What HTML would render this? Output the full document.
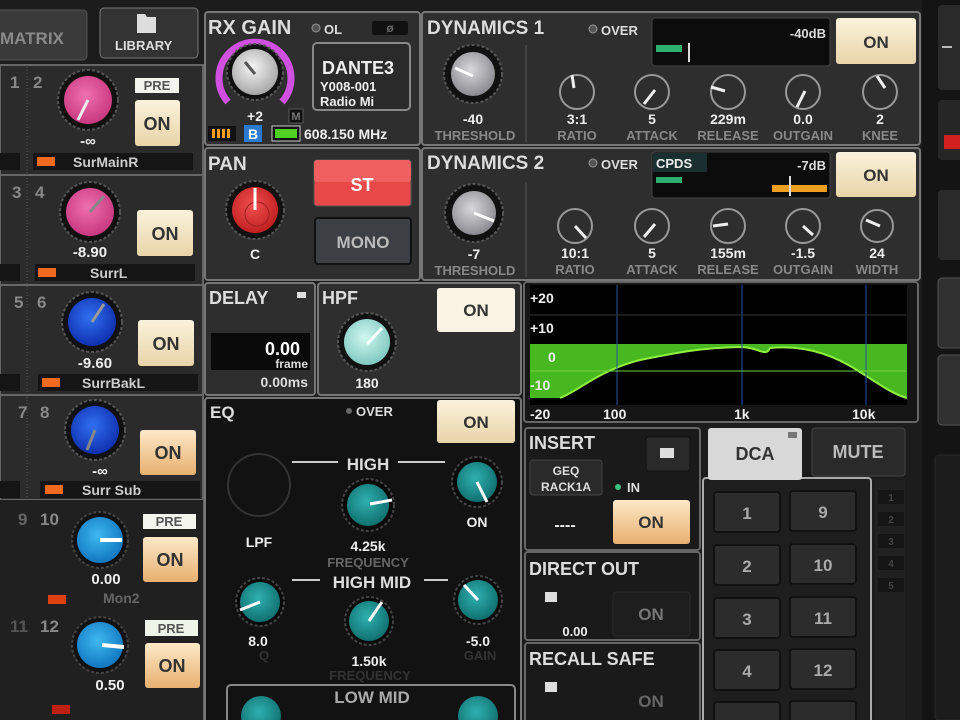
<!DOCTYPE html>
<html><head><meta charset="utf-8"><style>
html,body{margin:0;padding:0;background:#1a1a1a;}
svg{display:block;}
text{font-family:"Liberation Sans",sans-serif;font-weight:bold;}
</style></head><body>
<svg width="960" height="720" viewBox="0 0 960 720" xmlns="http://www.w3.org/2000/svg">
<defs>
<radialGradient id="gw" cx="45%" cy="40%" r="60%"><stop offset="0" stop-color="#f4f4f4"/><stop offset="1" stop-color="#a8a8a8"/></radialGradient>
<radialGradient id="gg" cx="45%" cy="40%" r="60%"><stop offset="0" stop-color="#d8d8dc"/><stop offset="1" stop-color="#8a8a90"/></radialGradient>
<radialGradient id="gp" cx="45%" cy="40%" r="60%"><stop offset="0" stop-color="#f070b0"/><stop offset="1" stop-color="#c83880"/></radialGradient>
<radialGradient id="gr" cx="45%" cy="40%" r="60%"><stop offset="0" stop-color="#f05050"/><stop offset="1" stop-color="#c02020"/></radialGradient>
<radialGradient id="gb" cx="45%" cy="40%" r="60%"><stop offset="0" stop-color="#3070f0"/><stop offset="1" stop-color="#1030b0"/></radialGradient>
<radialGradient id="gc" cx="45%" cy="40%" r="60%"><stop offset="0" stop-color="#40b8f0"/><stop offset="1" stop-color="#1078c0"/></radialGradient>
<radialGradient id="gt" cx="45%" cy="40%" r="60%"><stop offset="0" stop-color="#30b0b0"/><stop offset="1" stop-color="#107070"/></radialGradient>
<radialGradient id="gm" cx="45%" cy="40%" r="60%"><stop offset="0" stop-color="#d0f8f0"/><stop offset="1" stop-color="#80c8c0"/></radialGradient>
<linearGradient id="on" x1="0" y1="0" x2="0" y2="1"><stop offset="0" stop-color="#fbf2dc"/><stop offset="1" stop-color="#e8d4a8"/></linearGradient>
<linearGradient id="ono" x1="0" y1="0" x2="0" y2="1"><stop offset="0" stop-color="#fde8c8"/><stop offset="1" stop-color="#e8b070"/></linearGradient>
</defs>
<rect width="960" height="720" fill="#1c1c1c"/>

<!-- top tabs -->
<rect x="-5" y="10" width="92" height="50" rx="4" fill="#3a3a3a" stroke="#555"/>
<text x="0" y="44" fill="#8a8a8a" font-size="17">MATRIX</text>
<rect x="100" y="8" width="98" height="50" rx="4" fill="#333" stroke="#777"/>
<path d="M137 14h8l2 3h9v16h-19z" fill="#ddd"/>
<text x="115" y="50" fill="#ddd" font-size="13">LIBRARY</text>

<!-- left channel strip -->
<rect x="0" y="65" width="203" height="655" fill="#2b2b2b" stroke="#666" stroke-width="2"/>
<line x1="27" y1="67" x2="27" y2="720" stroke="#555" stroke-dasharray="1 2"/>
<g stroke="#666" stroke-width="2"><line x1="0" y1="175" x2="203" y2="175"/><line x1="0" y1="285" x2="203" y2="285"/><line x1="0" y1="395" x2="203" y2="395"/><line x1="0" y1="500" x2="203" y2="500"/><line x1="0" y1="610" x2="203" y2="610"/></g>
<rect x="0" y="500" width="203" height="220" fill="#202020"/>
<g fill="#888" font-size="17">
<text x="10" y="88">1</text><text x="33" y="88">2</text>
<text x="12" y="198">3</text><text x="35" y="198">4</text>
<text x="14" y="308">5</text><text x="37" y="308">6</text>
<text x="18" y="418">7</text><text x="40" y="418">8</text>
<text x="18" y="525" fill="#666">9</text><text x="40" y="525">10</text>
<text x="10" y="632" fill="#555">11</text><text x="40" y="632">12</text>
</g>
<!-- name bars -->
<g fill="#151515">
<rect x="0" y="153" width="20" height="17"/><rect x="33" y="153" width="160" height="17"/>
<rect x="0" y="264" width="20" height="17"/><rect x="35" y="264" width="160" height="17"/>
<rect x="0" y="374" width="20" height="17"/><rect x="38" y="374" width="160" height="17"/>
<rect x="0" y="481" width="20" height="17"/><rect x="40" y="481" width="160" height="17"/>
</g>
<g fill="#f06a20"><rect x="37" y="157" width="18" height="9"/><rect x="38" y="268" width="18" height="9"/><rect x="42" y="378" width="18" height="9"/><rect x="45" y="485" width="18" height="9"/><rect x="48" y="595" width="18" height="9" fill="#e04010"/><rect x="52" y="705" width="18" height="9" fill="#c02010"/></g>
<g fill="#ccc" font-size="14" font-weight="normal">
<text x="73" y="167">SurMainR</text><text x="90" y="278">SurrL</text><text x="82" y="388">SurrBakL</text><text x="82" y="495">Surr Sub</text><text x="103" y="603" fill="#666">Mon2</text>
</g>
<!-- left knobs -->
<g>
<circle cx="88" cy="100" r="30" fill="#111" stroke="#555" stroke-dasharray="3 2" stroke-width="2"/><circle cx="88" cy="100" r="24" fill="url(#gp)"/><line x1="88" y1="100" x2="78" y2="120" stroke="#eee" stroke-width="3"/>
<circle cx="90" cy="212" r="30" fill="#111" stroke="#555" stroke-dasharray="3 2" stroke-width="2"/><circle cx="90" cy="212" r="24" fill="url(#gp)"/><line x1="90" y1="212" x2="104" y2="196" stroke="#888" stroke-width="3"/>
<circle cx="92" cy="322" r="30" fill="#111" stroke="#555" stroke-dasharray="3 2" stroke-width="2"/><circle cx="92" cy="322" r="24" fill="url(#gb)"/><line x1="92" y1="322" x2="104" y2="304" stroke="#999" stroke-width="3"/>
<circle cx="95" cy="430" r="30" fill="#111" stroke="#555" stroke-dasharray="3 2" stroke-width="2"/><circle cx="95" cy="430" r="24" fill="url(#gb)"/><line x1="95" y1="430" x2="87" y2="450" stroke="#888" stroke-width="3"/>
<circle cx="100" cy="540" r="28" fill="#111" stroke="#444" stroke-dasharray="3 2" stroke-width="2"/><circle cx="100" cy="540" r="23" fill="url(#gc)"/><line x1="100" y1="540" x2="122" y2="540" stroke="#fff" stroke-width="4"/>
<circle cx="100" cy="645" r="28" fill="#111" stroke="#444" stroke-dasharray="3 2" stroke-width="2"/><circle cx="100" cy="645" r="23" fill="url(#gc)"/><line x1="102" y1="645" x2="124" y2="647" stroke="#fff" stroke-width="4"/>
</g>
<g fill="#eee" font-size="15" text-anchor="middle">
<text x="88" y="146">-∞</text><text x="90" y="257">-8.90</text><text x="95" y="368">-9.60</text><text x="100" y="476">-∞</text><text x="106" y="584">0.00</text><text x="110" y="690">0.50</text>
</g>
<g font-size="13" fill="#555" text-anchor="middle" font-weight="normal">
<rect x="135" y="78" width="44" height="15" fill="#f4f4ee"/><text x="157" y="90">PRE</text>
<rect x="143" y="514" width="53" height="15" fill="#f4f4ee"/><text x="169" y="526">PRE</text>
<rect x="145" y="620" width="53" height="16" fill="#eef4e8"/><text x="171" y="633">PRE</text>
</g>
<g font-size="18" fill="#333" text-anchor="middle" font-weight="normal">
<rect x="135" y="100" width="45" height="46" rx="3" fill="url(#on)"/><text x="157" y="130">ON</text>
<rect x="137" y="210" width="56" height="46" rx="3" fill="url(#on)"/><text x="165" y="240">ON</text>
<rect x="138" y="320" width="56" height="46" rx="3" fill="url(#on)"/><text x="166" y="350">ON</text>
<rect x="140" y="430" width="56" height="45" rx="3" fill="url(#ono)"/><text x="168" y="459">ON</text>
<rect x="143" y="537" width="55" height="45" rx="3" fill="url(#ono)"/><text x="170" y="566">ON</text>
<rect x="145" y="643" width="55" height="45" rx="3" fill="url(#ono)"/><text x="172" y="672">ON</text>
</g>

<!-- RX GAIN -->
<rect x="205" y="12" width="215" height="133" rx="3" fill="#2e2e2e" stroke="#777" stroke-width="2"/>
<text x="208" y="34" fill="#ddd" font-size="20" font-weight="normal">RX GAIN</text>
<circle cx="316" cy="28" r="4" fill="#555" stroke="#999"/><text x="324" y="34" fill="#ddd" font-size="13">OL</text>
<rect x="372" y="21" width="36" height="14" rx="2" fill="#111"/><text x="390" y="32" fill="#666" font-size="12" text-anchor="middle">ø</text>
<path d="M228 102 A36 36 0 1 1 282 102" fill="none" stroke="#d050e0" stroke-width="7"/>
<circle cx="255" cy="72" r="28" fill="#111" stroke="#555" stroke-dasharray="3 2" stroke-width="2"/><circle cx="255" cy="72" r="23" fill="url(#gw)"/><line x1="255" y1="74" x2="245" y2="62" stroke="#555" stroke-width="3"/>
<text x="255" y="121" fill="#eee" font-size="14" text-anchor="middle">+2</text>
<rect x="289" y="109" width="14" height="14" fill="#111" stroke="#555"/><text x="296" y="120" fill="#777" font-size="11" text-anchor="middle">M</text>
<rect x="313" y="43" width="97" height="67" rx="4" fill="#2a2a2a" stroke="#888" stroke-width="2"/>
<text x="322" y="74" fill="#eee" font-size="18">DANTE3</text>
<text x="320" y="91" fill="#eee" font-size="13" font-weight="normal">Y008-001</text>
<text x="320" y="106" fill="#eee" font-size="13" font-weight="normal">Radio Mi</text>
<rect x="208" y="126" width="28" height="15" fill="#111"/><g fill="#f0a020"><rect x="212" y="129" width="3" height="9"/><rect x="217" y="129" width="3" height="9"/><rect x="222" y="129" width="3" height="9"/><rect x="227" y="129" width="3" height="9"/></g>
<rect x="244" y="125" width="18" height="17" fill="#2b7ad0"/><text x="253" y="139" fill="#fff" font-size="14" text-anchor="middle">B</text>
<rect x="272" y="126" width="28" height="15" fill="#111" stroke="#ccc"/><rect x="275" y="129" width="22" height="9" fill="#50d020"/>
<text x="304" y="139" fill="#eee" font-size="14">608.150 MHz</text>

<!-- PAN -->
<rect x="205" y="148" width="215" height="132" rx="3" fill="#2e2e2e" stroke="#777" stroke-width="2"/>
<text x="208" y="170" fill="#ddd" font-size="19" font-weight="normal">PAN</text>
<circle cx="255" cy="210" r="29" fill="#111" stroke="#555" stroke-dasharray="3 2" stroke-width="2"/><circle cx="255" cy="210" r="23" fill="url(#gr)"/><circle cx="257" cy="214" r="12" fill="none" stroke="#a02020"/><line x1="255" y1="210" x2="255" y2="188" stroke="#fff" stroke-width="3"/>
<text x="255" y="259" fill="#eee" font-size="14" text-anchor="middle">C</text>
<rect x="314" y="160" width="97" height="46" rx="3" fill="#e84848" stroke="#555"/><rect x="314" y="160" width="97" height="22" rx="3" fill="#f06060"/>
<text x="362" y="191" fill="#fff" font-size="18" text-anchor="middle">ST</text>
<rect x="315" y="218" width="96" height="46" rx="3" fill="#3c4044" stroke="#111" stroke-width="2"/>
<text x="363" y="248" fill="#bbb" font-size="17" text-anchor="middle">MONO</text>

<!-- DELAY -->
<rect x="205" y="283" width="110" height="112" rx="3" fill="#2e2e2e" stroke="#777" stroke-width="2"/>
<text x="209" y="304" fill="#ddd" font-size="18" font-weight="normal">DELAY</text>
<rect x="297" y="292" width="9" height="6" fill="#ddd"/>
<rect x="211" y="333" width="99" height="37" fill="#0a0a0a"/>
<text x="300" y="355" fill="#fff" font-size="18" text-anchor="end">0.00</text>
<text x="308" y="368" fill="#ddd" font-size="12" text-anchor="end" font-weight="normal">frame</text>
<text x="308" y="387" fill="#ddd" font-size="14" text-anchor="end" font-weight="normal">0.00ms</text>

<!-- HPF -->
<rect x="318" y="283" width="203" height="112" rx="3" fill="#2e2e2e" stroke="#777" stroke-width="2"/>
<text x="322" y="304" fill="#ddd" font-size="18" font-weight="normal">HPF</text>
<rect x="437" y="288" width="78" height="44" rx="3" fill="#fbf4e4"/><text x="476" y="316" fill="#333" font-size="17" text-anchor="middle" font-weight="normal">ON</text>
<circle cx="367" cy="342" r="29" fill="#111" stroke="#555" stroke-dasharray="3 2" stroke-width="2"/><circle cx="367" cy="342" r="23" fill="url(#gm)"/><line x1="367" y1="344" x2="382" y2="328" stroke="#fff" stroke-width="3"/>
<text x="367" y="388" fill="#eee" font-size="14" text-anchor="middle">180</text>

<!-- EQ -->
<rect x="205" y="398" width="316" height="330" rx="3" fill="#121212" stroke="#777" stroke-width="2"/>
<text x="210" y="418" fill="#ddd" font-size="17">EQ</text>
<circle cx="349" cy="411" r="3" fill="#666"/><text x="356" y="416" fill="#ddd" font-size="13">OVER</text>
<rect x="437" y="400" width="78" height="43" rx="3" fill="url(#on)"/><text x="476" y="428" fill="#333" font-size="17" text-anchor="middle" font-weight="normal">ON</text>
<circle cx="259" cy="485" r="31" fill="none" stroke="#333" stroke-width="2"/>
<text x="259" y="547" fill="#eee" font-size="14" text-anchor="middle">LPF</text>
<g stroke="#ccc" stroke-width="2"><line x1="292" y1="462" x2="338" y2="462"/><line x1="398" y1="462" x2="445" y2="462"/><line x1="292" y1="580" x2="320" y2="580"/><line x1="424" y1="580" x2="448" y2="580"/><line x1="312" y1="696" x2="322" y2="696"/><line x1="422" y1="696" x2="446" y2="696"/></g>
<text x="368" y="470" fill="#ddd" font-size="17" text-anchor="middle" font-weight="normal">HIGH</text>
<text x="372" y="588" fill="#ddd" font-size="17" text-anchor="middle" font-weight="normal">HIGH MID</text>
<g>
<circle cx="368" cy="505" r="26" fill="#0a0a0a" stroke="#444" stroke-dasharray="3 2" stroke-width="2"/><circle cx="368" cy="505" r="21" fill="url(#gt)"/><line x1="370" y1="504" x2="392" y2="500" stroke="#fff" stroke-width="3"/>
<circle cx="477" cy="482" r="25" fill="#0a0a0a" stroke="#444" stroke-dasharray="3 2" stroke-width="2"/><circle cx="477" cy="482" r="20" fill="url(#gt)"/><line x1="477" y1="482" x2="487" y2="502" stroke="#fff" stroke-width="3"/>
<circle cx="260" cy="602" r="24" fill="#0a0a0a" stroke="#444" stroke-dasharray="3 2" stroke-width="2"/><circle cx="260" cy="602" r="20" fill="url(#gt)"/><line x1="260" y1="602" x2="240" y2="610" stroke="#fff" stroke-width="3"/>
<circle cx="369" cy="621" r="24" fill="#0a0a0a" stroke="#444" stroke-dasharray="3 2" stroke-width="2"/><circle cx="369" cy="621" r="20" fill="url(#gt)"/><line x1="369" y1="621" x2="382" y2="602" stroke="#fff" stroke-width="3"/>
<circle cx="478" cy="600" r="24" fill="#0a0a0a" stroke="#444" stroke-dasharray="3 2" stroke-width="2"/><circle cx="478" cy="600" r="20" fill="url(#gt)"/><line x1="478" y1="600" x2="464" y2="585" stroke="#fff" stroke-width="3"/>
</g>
<g fill="#eee" font-size="14" text-anchor="middle">
<text x="368" y="551">4.25k</text><text x="477" y="527">ON</text><text x="258" y="646">8.0</text><text x="369" y="666">1.50k</text><text x="478" y="646">-5.0</text>
</g>
<g fill="#666" font-size="13" text-anchor="middle" font-weight="normal"><text x="368" y="567">FREQUENCY</text><text x="264" y="660" fill="#333">Q</text><text x="480" y="660" fill="#333">GAIN</text><text x="370" y="680" fill="#333">FREQUENCY</text></g>
<rect x="227" y="685" width="288" height="45" rx="4" fill="#121212" stroke="#888" stroke-width="2"/>
<text x="372" y="703" fill="#aaa" font-size="17" text-anchor="middle" font-weight="normal">LOW MID</text>
<circle cx="261" cy="716" r="20" fill="url(#gt)"/><circle cx="478" cy="716" r="20" fill="url(#gt)"/>

<!-- DYNAMICS 1 -->
<rect x="422" y="12" width="498" height="133" rx="3" fill="#2e2e2e" stroke="#777" stroke-width="2"/>
<text x="427" y="34" fill="#ddd" font-size="19" font-weight="normal">DYNAMICS 1</text>
<circle cx="593" cy="29" r="4" fill="#555" stroke="#999"/><text x="601" y="35" fill="#ddd" font-size="13">OVER</text>
<rect x="652" y="18" width="178" height="48" rx="3" fill="#0c0c0c" stroke="#444"/>
<text x="826" y="38" fill="#ddd" font-size="13" text-anchor="end" font-weight="normal">-40dB</text>
<rect x="656" y="45" width="26" height="7" fill="#30b070"/><line x1="689" y1="43" x2="689" y2="62" stroke="#ddd" stroke-width="2"/>
<rect x="836" y="18" width="80" height="46" rx="3" fill="url(#on)"/><text x="876" y="48" fill="#333" font-size="17" text-anchor="middle" font-weight="normal">ON</text>
<line x1="526" y1="45" x2="526" y2="142" stroke="#555"/>
<circle cx="473" cy="74" r="29" fill="#111" stroke="#555" stroke-dasharray="3 2" stroke-width="2"/><circle cx="473" cy="74" r="22" fill="url(#gg)"/><line x1="473" y1="76" x2="455" y2="68" stroke="#fff" stroke-width="3"/>
<text x="473" y="124" fill="#eee" font-size="14" text-anchor="middle">-40</text>
<g fill="#888" font-size="13" text-anchor="middle"><text x="475" y="140">THRESHOLD</text><text x="577" y="140">RATIO</text><text x="652" y="140">ATTACK</text><text x="728" y="140">RELEASE</text><text x="803" y="140">OUTGAIN</text><text x="880" y="140">KNEE</text></g>
<g fill="none" stroke="#999" stroke-width="2"><circle cx="577" cy="92" r="17"/><circle cx="652" cy="92" r="17"/><circle cx="728" cy="92" r="17"/><circle cx="803" cy="92" r="17"/><circle cx="880" cy="92" r="17"/></g>
<g stroke="#eee" stroke-width="3"><line x1="572" y1="75" x2="574" y2="88"/><line x1="655" y1="90" x2="644" y2="104"/><line x1="725" y1="91" x2="711" y2="87"/><line x1="805" y1="91" x2="797" y2="107"/><line x1="885" y1="88" x2="877" y2="76"/></g>
<g fill="#eee" font-size="14" text-anchor="middle"><text x="577" y="124">3:1</text><text x="652" y="124">5</text><text x="728" y="124">229m</text><text x="803" y="124">0.0</text><text x="880" y="124">2</text></g>

<!-- DYNAMICS 2 -->
<rect x="422" y="148" width="498" height="132" rx="3" fill="#2e2e2e" stroke="#777" stroke-width="2"/>
<text x="427" y="169" fill="#ddd" font-size="19" font-weight="normal">DYNAMICS 2</text>
<circle cx="593" cy="163" r="4" fill="#555" stroke="#999"/><text x="601" y="169" fill="#ddd" font-size="13">OVER</text>
<rect x="652" y="152" width="178" height="46" rx="3" fill="#0c0c0c" stroke="#444"/>
<rect x="653" y="153" width="54" height="19" fill="#1a3030"/><text x="656" y="168" fill="#eee" font-size="13">CPDS</text>
<text x="826" y="170" fill="#ddd" font-size="13" text-anchor="end" font-weight="normal">-7dB</text>
<rect x="656" y="177" width="26" height="6" fill="#30b070"/><rect x="772" y="185" width="55" height="7" fill="#f0a020"/><line x1="790" y1="176" x2="790" y2="196" stroke="#ddd" stroke-width="2"/>
<rect x="836" y="152" width="80" height="45" rx="3" fill="url(#on)"/><text x="876" y="181" fill="#333" font-size="17" text-anchor="middle" font-weight="normal">ON</text>
<line x1="526" y1="182" x2="526" y2="277" stroke="#555"/>
<circle cx="474" cy="213" r="29" fill="#111" stroke="#555" stroke-dasharray="3 2" stroke-width="2"/><circle cx="474" cy="213" r="22" fill="url(#gg)"/><line x1="474" y1="213" x2="494" y2="221" stroke="#fff" stroke-width="3"/>
<text x="474" y="259" fill="#eee" font-size="14" text-anchor="middle">-7</text>
<g fill="#888" font-size="13" text-anchor="middle"><text x="475" y="275">THRESHOLD</text><text x="575" y="274">RATIO</text><text x="652" y="274">ATTACK</text><text x="728" y="274">RELEASE</text><text x="803" y="274">OUTGAIN</text><text x="877" y="274">WIDTH</text></g>
<g fill="none" stroke="#999" stroke-width="2"><circle cx="575" cy="226" r="17"/><circle cx="652" cy="226" r="17"/><circle cx="728" cy="226" r="17"/><circle cx="803" cy="226" r="17"/><circle cx="877" cy="226" r="16"/></g>
<g stroke="#eee" stroke-width="3"><line x1="575" y1="226" x2="586" y2="238"/><line x1="655" y1="224" x2="644" y2="237"/><line x1="728" y1="224" x2="713" y2="226"/><line x1="803" y1="226" x2="813" y2="235"/><line x1="880" y1="226" x2="866" y2="220"/></g>
<g fill="#eee" font-size="14" text-anchor="middle"><text x="575" y="258">10:1</text><text x="652" y="258">5</text><text x="728" y="258">155m</text><text x="803" y="258">-1.5</text><text x="877" y="258">24</text></g>

<!-- EQ graph -->
<rect x="524" y="282" width="394" height="140" rx="3" fill="#161616" stroke="#666" stroke-width="2"/>
<rect x="530" y="285" width="377" height="120" fill="#000"/>
<rect x="530" y="344" width="377" height="54" fill="#48b820"/>
<path d="M560 398 C580 390 600 370 640 360 C680 352 700 348 740 347 C760 347 765 358 770 348 C800 345 830 352 860 372 C880 385 895 395 907 398 Z" fill="#000"/>
<path d="M560 398 C580 390 600 370 640 360 C680 352 700 348 740 347 C760 347 765 358 770 348 C800 345 830 352 860 372 C880 385 895 395 907 398" fill="none" stroke="#90f040" stroke-width="2"/>
<g stroke="#2850a0" stroke-width="1"><line x1="617" y1="285" x2="617" y2="405"/><line x1="742" y1="285" x2="742" y2="405"/><line x1="866" y1="285" x2="866" y2="405"/></g>
<g stroke="#333" stroke-width="1"><line x1="530" y1="315" x2="907" y2="315"/><line x1="530" y1="371" x2="907" y2="371" stroke="#70d040"/></g>
<g fill="#eee" font-size="14"><text x="530" y="303">+20</text><text x="530" y="333">+10</text><text x="548" y="362">0</text><text x="530" y="390">-10</text><text x="530" y="419">-20</text><text x="603" y="419">100</text><text x="734" y="419">1k</text><text x="852" y="419">10k</text></g>

<!-- INSERT -->
<rect x="525" y="428" width="175" height="122" rx="3" fill="#1a1a1a" stroke="#666" stroke-width="2"/>
<text x="529" y="449" fill="#ddd" font-size="18" font-weight="normal">INSERT</text>
<rect x="646" y="437" width="44" height="34" rx="3" fill="#2a2a2a" stroke="#111"/><rect x="660" y="448" width="14" height="10" fill="#ddd"/>
<rect x="530" y="460" width="72" height="35" rx="3" fill="#2a2a2a" stroke="#444"/>
<text x="566" y="475" fill="#ddd" font-size="12" text-anchor="middle" font-weight="normal">GEQ</text><text x="566" y="491" fill="#ddd" font-size="12" text-anchor="middle" font-weight="normal">RACK1A</text>
<circle cx="618" cy="487" r="3" fill="#40c080"/><text x="627" y="492" fill="#ddd" font-size="13">IN</text>
<text x="565" y="530" fill="#eee" font-size="16" text-anchor="middle">----</text>
<rect x="613" y="500" width="77" height="44" rx="3" fill="url(#ono)"/><text x="651" y="528" fill="#333" font-size="17" text-anchor="middle" font-weight="normal">ON</text>
<!-- DIRECT OUT -->
<rect x="525" y="552" width="175" height="88" rx="3" fill="#1a1a1a" stroke="#666" stroke-width="2"/>
<text x="529" y="575" fill="#ddd" font-size="18" font-weight="normal">DIRECT OUT</text>
<rect x="545" y="592" width="12" height="10" fill="#ddd"/>
<text x="575" y="636" fill="#eee" font-size="13" text-anchor="middle">0.00</text>
<rect x="613" y="592" width="77" height="44" rx="3" fill="#1e1e1e" stroke="#2a2a2a"/><text x="651" y="620" fill="#777" font-size="17" text-anchor="middle">ON</text>
<!-- RECALL SAFE -->
<rect x="525" y="643" width="175" height="85" rx="3" fill="#1a1a1a" stroke="#666" stroke-width="2"/>
<text x="529" y="665" fill="#ddd" font-size="18" font-weight="normal">RECALL SAFE</text>
<rect x="545" y="682" width="12" height="10" fill="#ddd"/>
<text x="651" y="707" fill="#666" font-size="17" text-anchor="middle">ON</text>

<!-- DCA / MUTE -->
<rect x="703" y="478" width="168" height="250" rx="3" fill="#1e1e1e" stroke="#aaa" stroke-width="2"/>
<rect x="708" y="428" width="94" height="52" rx="3" fill="#d8d8d8"/>
<rect x="788" y="432" width="9" height="6" fill="#777"/>
<text x="755" y="460" fill="#333" font-size="18" text-anchor="middle" font-weight="normal">DCA</text>
<rect x="812" y="428" width="93" height="48" rx="3" fill="#2a2a2a" stroke="#444"/>
<text x="858" y="458" fill="#bbb" font-size="18" text-anchor="middle">MUTE</text>
<g fill="#2c2c2c" stroke="#111" stroke-width="2">
<rect x="714" y="492" width="66" height="40" rx="3"/><rect x="790" y="491" width="66" height="40" rx="3"/>
<rect x="714" y="545" width="66" height="40" rx="3"/><rect x="790" y="544" width="66" height="40" rx="3"/>
<rect x="714" y="598" width="66" height="40" rx="3"/><rect x="790" y="597" width="66" height="40" rx="3"/>
<rect x="714" y="650" width="66" height="40" rx="3"/><rect x="790" y="649" width="66" height="40" rx="3"/>
<rect x="714" y="702" width="66" height="30" rx="3"/><rect x="790" y="701" width="66" height="30" rx="3"/>
</g>
<g fill="#aaa" font-size="17" text-anchor="middle">
<text x="747" y="519">1</text><text x="823" y="518">9</text><text x="747" y="572">2</text><text x="823" y="571">10</text><text x="747" y="625">3</text><text x="823" y="624">11</text><text x="747" y="677">4</text><text x="823" y="676">12</text>
</g>
<rect x="875" y="480" width="30" height="240" fill="#202020"/>
<g fill="#151515"><rect x="878" y="490" width="26" height="14"/><rect x="878" y="512" width="26" height="14"/><rect x="878" y="534" width="26" height="14"/><rect x="878" y="556" width="26" height="14"/><rect x="878" y="578" width="26" height="14"/></g>
<g fill="#444" font-size="10" text-anchor="middle"><text x="891" y="501">1</text><text x="891" y="523">2</text><text x="891" y="545">3</text><text x="891" y="567">4</text><text x="891" y="589">5</text></g>

<!-- far right -->
<rect x="922" y="0" width="38" height="720" fill="#141414"/>
<rect x="938" y="5" width="30" height="85" rx="4" fill="#2a2a2a"/><rect x="942" y="46" width="10" height="2" fill="#bbb"/>
<rect x="938" y="100" width="30" height="60" rx="4" fill="#262626"/><rect x="944" y="135" width="20" height="14" fill="#d02020"/>
<rect x="938" y="190" width="30" height="70" rx="4" fill="#2a2a2a"/>
<rect x="938" y="278" width="30" height="70" rx="4" fill="#303030" stroke="#555"/>
<rect x="938" y="355" width="30" height="70" rx="4" fill="#303030" stroke="#555"/>
<rect x="935" y="455" width="30" height="265" rx="4" fill="#1c1c1c" stroke="#2a2a2a"/>
</svg>
</body></html>
